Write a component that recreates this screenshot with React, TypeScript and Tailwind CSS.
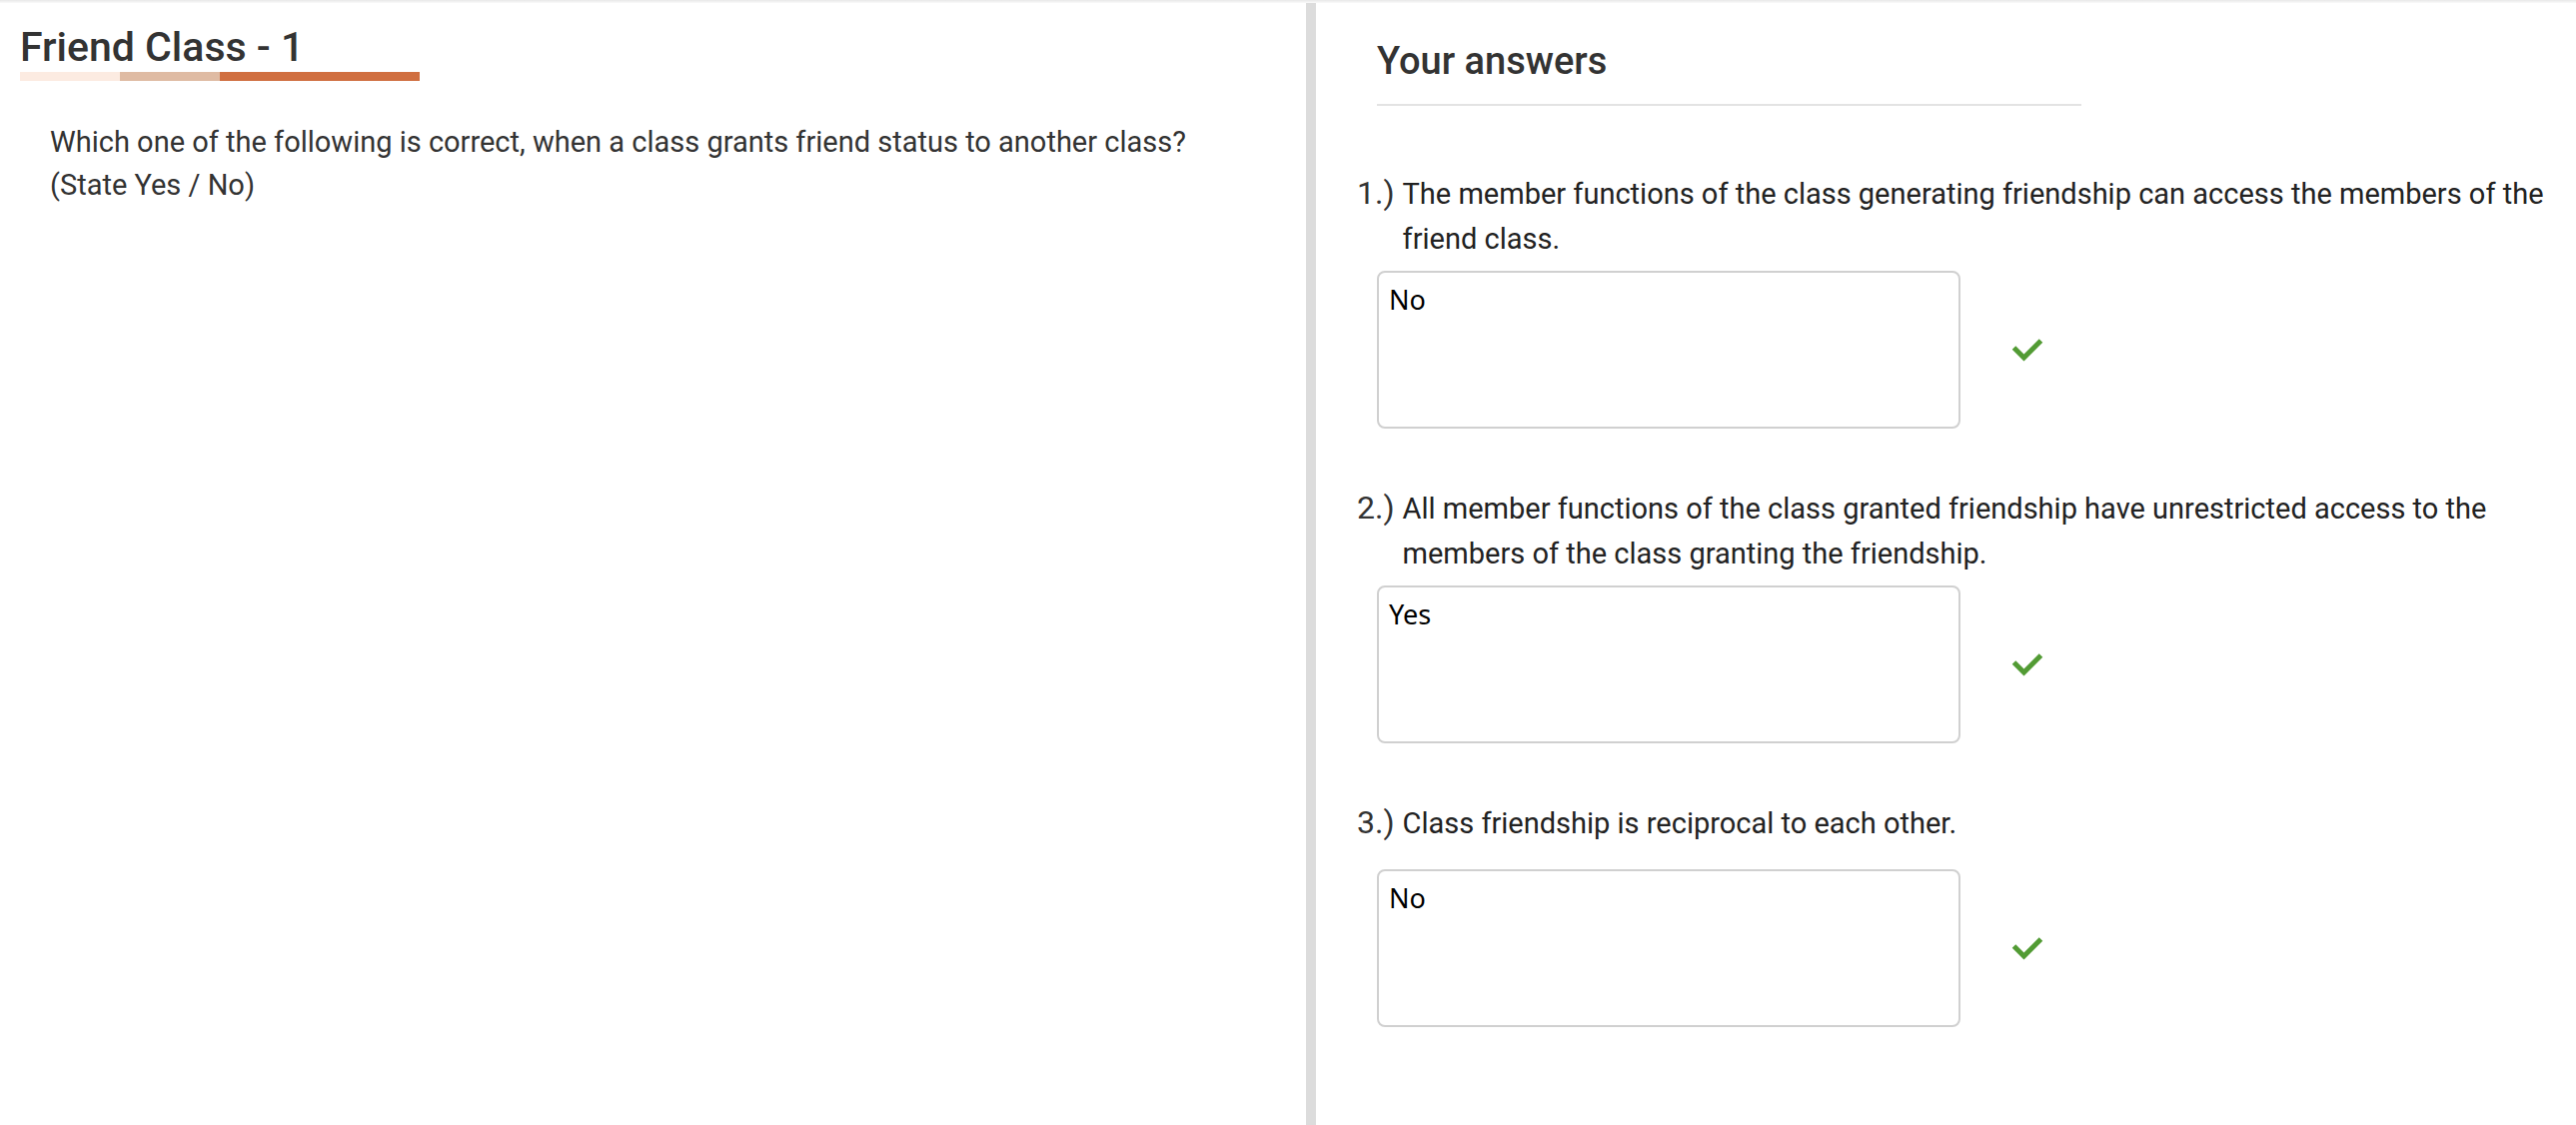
import React from "react";

const questions = [
  {
    n: "1.)",
    text: "The member functions of the class generating friendship can access the members of the friend class.",
    answer: "No",
  },
  {
    n: "2.)",
    text: "All member functions of the class granted friendship have unrestricted access to the members of the class granting the friendship.",
    answer: "Yes",
  },
  {
    n: "3.)",
    text: "Class friendship is reciprocal to each other.",
    answer: "No",
  },
];

function Check() {
  return (
    <svg width="32" height="24" viewBox="0 0 32 24" className="block">
      <path d="M2.5 10 L12.5 20 L29.5 3" fill="none" stroke="#529b34" strokeWidth="5" />
    </svg>
  );
}

export default function App() {
  return (
    <div className="min-h-[1126px] w-full bg-white font-['Roboto',sans-serif]">
      <div className="h-[3px] bg-gradient-to-b from-[#e8e8e8] to-[#fafafa]" />
      <div className="flex min-h-[1123px]">
        <div className="w-[1307px] shrink-0 pl-[20px] pt-[19px]">
          <h1 className="text-[41px] leading-[50px] font-medium text-[#333]">Friend Class - 1</h1>
          <div className="flex h-[9px]">
            <div className="w-[100px] bg-[#fcebe1]" />
            <div className="w-[100px] bg-[#dfbba3]" />
            <div className="w-[200px] bg-[#d06f40]" />
          </div>
          <p className="ml-[30px] mt-[40px] text-[29px] leading-[43px] text-[#333]">
            Which one of the following is correct, when a class grants friend status to another class?
            <br />
            (State Yes / No)
          </p>
        </div>
        <div className="w-[10px] shrink-0 bg-[#dcdcdc]" />
        <div className="flex-1 pl-[41px] pr-[30px] pt-[36px]">
          <div className="ml-[20px] w-[705px] border-b-2 border-[#e3e3e3] pb-[21px]">
            <h2 className="text-[38px] leading-[44px] font-medium text-[#333]">Your answers</h2>
          </div>
          <div className="mt-[65px] flex flex-col gap-[57px]">
            {questions.map((q) => (
              <div key={q.n}>
                <div className="flex min-h-[60px] items-baseline gap-[8px]">
                  <span className="shrink-0 text-[32px] leading-[45px] text-[#333]">{q.n}</span>
                  <span className="flex-1 text-[29px] leading-[45px] text-[#222]">{q.text}</span>
                </div>
                <div className="ml-[20px] mt-[9px] flex items-center">
                  <div className="h-[158px] w-[584px] rounded-[8px] border-2 border-[#d0d0d0] pl-[10px] pt-[12px] font-['Noto_Sans',sans-serif] text-[27px] leading-[30px] text-black">
                    {q.answer}
                  </div>
                  <div className="ml-[51px]">
                    <Check />
                  </div>
                </div>
              </div>
            ))}
          </div>
        </div>
      </div>
    </div>
  );
}
